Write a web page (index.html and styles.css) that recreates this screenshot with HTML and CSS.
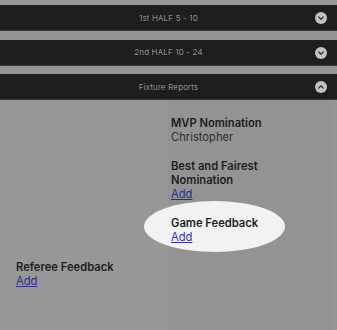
FILE: index.html
```
<!DOCTYPE html>
<html lang="en">

<head>
  <meta charset="UTF-8" />
  <meta name="viewport" content="width=device-width, initial-scale=1.0" />
  <title>Fixture Reports</title>
  <link rel="stylesheet" href="styles.css">
</head>

<body>
  <div class="page">
    <div class="accordion">
      <div class="acc-header">
        <span class="acc-title">1st HALF 5 - 10</span>
        <span class="acc-icon">
          <svg viewBox="0 0 12 12" width="12" height="12"><path d="M3.8 5 L6 7.2 L8.2 5" /></svg>
        </span>
      </div>
      <div class="acc-header">
        <span class="acc-title">2nd HALF 10 - 24</span>
        <span class="acc-icon">
          <svg viewBox="0 0 12 12" width="12" height="12"><path d="M3.8 5 L6 7.2 L8.2 5" /></svg>
        </span>
      </div>
      <div class="acc-header">
        <span class="acc-title">Fixture Reports</span>
        <span class="acc-icon">
          <svg viewBox="0 0 12 12" width="12" height="12"><path d="M3.8 7 L6 4.8 L8.2 7" /></svg>
        </span>
      </div>
    </div>

    <div class="reports">
      <div class="col col-left">
        <div class="item">
          <div class="label">Referee Feedback</div>
          <a class="add" href="#">Add</a>
        </div>
      </div>
      <div class="col col-right">
        <div class="item">
          <div class="label">MVP Nomination</div>
          <div class="value">Christopher</div>
        </div>
        <div class="item">
          <div class="label">Best and Fairest<br>Nomination</div>
          <a class="add" href="#">Add</a>
        </div>
        <div class="item spotlight-item">
          <div class="spotlight"></div>
          <div class="label">Game Feedback</div>
          <a class="add" href="#">Add</a>
        </div>
      </div>
    </div>
  </div>
</body>

</html>
```

FILE: styles.css
```
html, body {
  margin: 0;
  padding: 0;
}

body {
  font-family: Inter, 'Liberation Sans', sans-serif;
  background: #7e7e7e;
  width: 337px;
  height: 330px;
  overflow: hidden;
}

.page {
  background: #959595;
  min-height: 330px;
  padding-top: 5px;
}

.accordion {
  display: flex;
  flex-direction: column;
  gap: 8.5px;
}

.acc-header {
  position: relative;
  height: 26px;
  background: #1e1e1e;
  border-bottom: 1px solid #3a3a3a;
  box-sizing: border-box;
  display: flex;
  align-items: center;
  justify-content: center;
}

.acc-title {
  font-size: 8px;
  font-weight: 300;
  color: #b4b4b4;
  letter-spacing: 0.2px;
}

.acc-icon {
  position: absolute;
  right: 10px;
  top: 7px;
  width: 12px;
  height: 12px;
  border-radius: 50%;
  background: #c2c2c2;
  display: flex;
}

.acc-icon path {
  fill: none;
  stroke: #3a3a3a;
  stroke-width: 1.3;
  stroke-linecap: round;
  stroke-linejoin: round;
}

.reports {
  display: grid;
  grid-template-columns: 168px 165px;
  min-height: 231px;
}

.col {
  padding-top: 16px;
  display: flex;
  flex-direction: column;
  gap: 15px;
}

.col-left {
  padding-left: 16px;
  justify-content: flex-end;
  padding-bottom: 43px;
  background: #979797;
}

.col-right {
  padding-left: 3px;
  background: #939393;
}

.item {
  font-size: 11.2px;
  line-height: 14px;
}

.label {
  font-weight: 600;
  color: #1d1d1d;
}

.value {
  color: #2e2e2e;
}

.add {
  color: #2c2c8c;
  text-decoration: underline;
}

.spotlight-item {
  position: relative;
}

.spotlight-item .label,
.spotlight-item .add {
  position: relative;
}

.spotlight-item .add {
  color: #3535b0;
}

.spotlight {
  position: absolute;
  left: -27px;
  top: -15px;
  width: 141px;
  height: 51px;
  border-radius: 50%;
  background: #f2f2f2;
}
```
